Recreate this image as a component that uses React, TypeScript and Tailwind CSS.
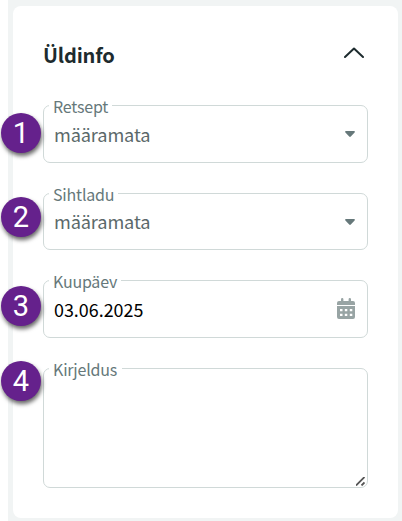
import { ReactNode, useState } from "react";

type FieldProps = {
  step: number;
  label: string;
  className: string;
  labelClassName: string;
  badgeClassName: string;
  children: ReactNode;
};

function Field({
  step,
  label,
  className,
  labelClassName,
  badgeClassName,
  children,
}: FieldProps) {
  return (
    <div className={`relative w-[325px] ${className}`}>
      <div className="flex h-full items-center justify-between rounded-[7px] border border-[#d0d9d8] pr-3 pl-[10px]">
        {children}
      </div>
      <label
        className={`absolute -top-[11px] left-[6px] h-6 bg-white pl-1 text-[16px] leading-6 tracking-[-0.2px] whitespace-nowrap text-[#66787a] ${labelClassName}`}
      >
        {label}
      </label>
      {/* numbered marker */}
      <span
        className={`absolute -left-[42px] flex size-10 items-center justify-center rounded-full bg-[#65218c] pt-px font-[Roboto,sans-serif] text-[29px] leading-none text-white shadow-[1px_3px_4px_rgba(0,0,0,0.6)] ${badgeClassName}`}
      >
        {step}
      </span>
    </div>
  );
}

function Caret() {
  return (
    <svg width="10" height="6" viewBox="0 0 10 6">
      <path
        d="M1 0H9C9.9 0 10.2 .9 9.6 1.5L5.8 5.5C5.3 6.1 4.7 6.1 4.2 5.5L.4 1.5C-.2 .9 .1 0 1 0Z"
        fill="#66787a"
      />
    </svg>
  );
}

function CalendarIcon() {
  return (
    <svg
      width="18"
      height="21"
      viewBox="0 0 18 21"
      fill="#98a4a4"
      className="mb-[2px]"
    >
      <path d="M4 3V1.2Q4 0 5.2 0T6.4 1.2V3H11.6V1.2Q11.6 0 12.8 0T14 1.2V3H16Q18 3 18 5V7H0V5Q0 3 2 3Z" />
      <path
        fillRule="evenodd"
        d="M0 8H18V19Q18 21 16 21H2Q0 21 0 19ZM3 11V13.2H5.5V11ZM7.8 11V13.2H10.3V11ZM12.8 11V13.2H15.3V11ZM3 15.8V18H5.5V15.8ZM7.8 15.8V18H10.3V15.8ZM12.8 15.8V18H15.3V15.8Z"
      />
    </svg>
  );
}

export default function App() {
  const [open, setOpen] = useState(true);

  return (
    <main className="h-[521px] w-[402px] bg-white pl-2 font-['Noto_Sans_CJK_SC',sans-serif]">
      <div className="h-full bg-[#f1f4f4] pt-[6px] pr-1 pl-[5px]">
        <section className="h-[512px] rounded-[8px] bg-white pt-[35px] pl-[30px]">
          <header className="flex h-7 w-[325px] items-center justify-between">
            <h2 className="text-[20px] leading-7 font-bold tracking-[-0.15px] text-[#1d2b2e]">
              Üldinfo
            </h2>
            <button
              aria-label="Üldinfo"
              onClick={() => setOpen(!open)}
              className="mr-1 mb-1"
            >
              <svg
                width="20"
                height="12"
                viewBox="0 0 20 12"
                fill="none"
                stroke="#1d2b2e"
                strokeWidth="2"
                strokeLinecap="round"
                strokeLinejoin="round"
              >
                <path d="M1 10L10 1.5L19 10" />
              </svg>
            </button>
          </header>

          {open ? (
            <div className="pt-9">
              <Field
                step={1}
                label="Retsept"
                className="h-[58px]"
                labelClassName="w-[63px]"
                badgeClassName="top-2"
              >
                <span className="text-[18.2px] leading-6 tracking-[-0.15px] text-[#5b696a]">
                  määramata
                </span>
                <Caret />
              </Field>
              <Field
                step={2}
                label="Sihtladu"
                className="mt-[30px] h-[57px]"
                labelClassName="w-[69px]"
                badgeClassName="top-1"
              >
                <span className="mb-px text-[18.2px] leading-6 tracking-[-0.15px] text-[#5b696a]">
                  määramata
                </span>
                <Caret />
              </Field>
              <Field
                step={3}
                label="Kuupäev"
                className="mt-[30px] h-[58px]"
                labelClassName="w-[72px]"
                badgeClassName="top-[6px]"
              >
                <span className="text-[17.9px] leading-6 text-black">03.06.2025</span>
                <CalendarIcon />
              </Field>
              <Field
                step={4}
                label="Kirjeldus"
                className="mt-[30px] h-[120px]"
                labelClassName="w-[73px]"
                badgeClassName="-top-[7px]"
              >
                <textarea className="h-full w-full resize-none pt-4 outline-none" />
                {/* resize grip */}
                <svg
                  width="9"
                  height="9"
                  viewBox="0 0 9 9"
                  className="absolute right-[3px] bottom-[2px]"
                  stroke="#555"
                  strokeWidth="1.8"
                >
                  <path d="M0 8.5L8.5 0M5.5 8.5L8.5 5.5" />
                </svg>
              </Field>
            </div>
          ) : null}
        </section>
      </div>
    </main>
  );
}
